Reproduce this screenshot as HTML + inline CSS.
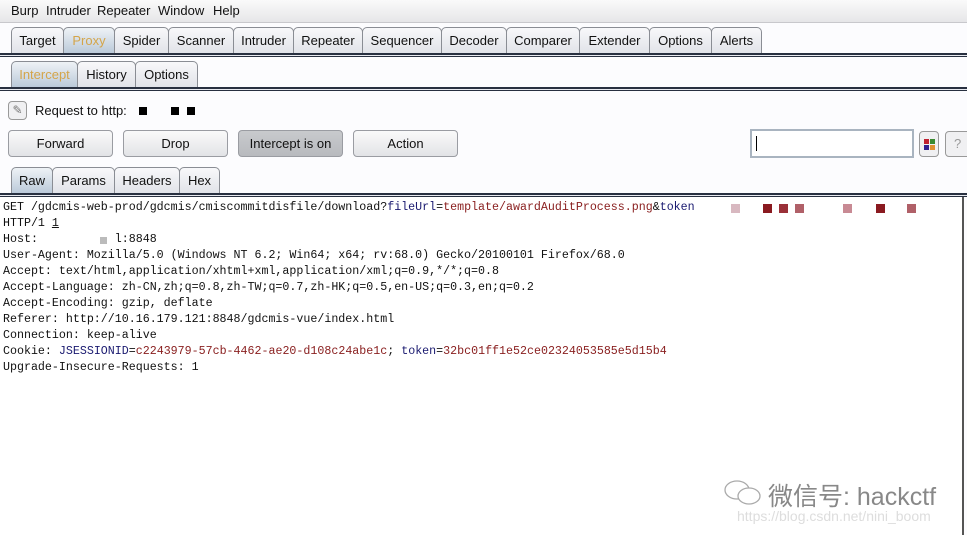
<!DOCTYPE html>
<html><head><meta charset="utf-8"><style>
*{box-sizing:border-box;margin:0;padding:0}
body{width:967px;height:535px;overflow:hidden;background:#fcfcfe;font-family:"Liberation Sans",sans-serif;font-size:13px;color:#111;position:relative}
.abs{position:absolute}
.menu{left:0;top:0;width:967px;height:23px;background:linear-gradient(#fafafa,#e6e6e8);border-bottom:1px solid #c8c8cc}
.menu span{position:absolute;top:3px}
.tab{position:absolute;height:27px;border:1px solid #8a8d94;border-bottom:none;border-radius:5px 5px 0 0;background:linear-gradient(#f8f8fa,#e0e2e8);text-align:center;line-height:25px;font-size:13px}
.tab.sel{background:linear-gradient(#eef2f6,#b9c8d8);color:#d4a54a}
.line{position:absolute;left:0;width:967px;height:4px;border-top:2px solid #283040;border-bottom:1px solid #283040;background:#e8eaf0}
.btn{position:absolute;top:130px;height:27px;width:105px;border:1px solid #9a9ca2;border-radius:4px;background:linear-gradient(#fafafa,#e2e3e6);text-align:center;line-height:25px;font-size:13px}
.code{left:3px;top:200px;font-family:"Liberation Mono",monospace;font-size:11.65px;line-height:16px;white-space:pre;color:#111}
.b{color:#1a1a70}.r{color:#8a2020}
.sq{position:absolute;width:9px;height:9px;top:204px}
</style></head><body>
<div class="abs menu"><span style="left:11px">Burp</span><span style="left:46px">Intruder</span><span style="left:97px">Repeater</span><span style="left:158px">Window</span><span style="left:213px">Help</span></div>
<div class="tab" style="left:11px;top:27px;width:53px">Target</div>
<div class="tab sel" style="left:63px;top:27px;width:52px">Proxy</div>
<div class="tab" style="left:114px;top:27px;width:55px">Spider</div>
<div class="tab" style="left:168px;top:27px;width:66px">Scanner</div>
<div class="tab" style="left:233px;top:27px;width:61px">Intruder</div>
<div class="tab" style="left:293px;top:27px;width:70px">Repeater</div>
<div class="tab" style="left:362px;top:27px;width:80px">Sequencer</div>
<div class="tab" style="left:441px;top:27px;width:66px">Decoder</div>
<div class="tab" style="left:506px;top:27px;width:74px">Comparer</div>
<div class="tab" style="left:579px;top:27px;width:71px">Extender</div>
<div class="tab" style="left:649px;top:27px;width:63px">Options</div>
<div class="tab" style="left:711px;top:27px;width:51px">Alerts</div>
<div class="line" style="top:53px"></div>
<div class="tab sel" style="left:11px;top:61px;width:67px">Intercept</div>
<div class="tab" style="left:77px;top:61px;width:59px">History</div>
<div class="tab" style="left:135px;top:61px;width:63px">Options</div>
<div class="line" style="top:87px"></div>
<div class="abs" style="left:8px;top:101px;width:19px;height:19px;border:1px solid #999;border-radius:4px;background:#f0f0f2;text-align:center;line-height:17px;color:#777;font-size:12px">✎</div>
<div class="abs" style="left:35px;top:103px">Request to http:</div>
<div class="abs" style="left:139px;top:107px;width:8px;height:8px;background:#000"></div>
<div class="abs" style="left:171px;top:107px;width:8px;height:8px;background:#000"></div>
<div class="abs" style="left:187px;top:107px;width:8px;height:8px;background:#000"></div>
<div class="btn" style="left:8px">Forward</div>
<div class="btn" style="left:123px">Drop</div>
<div class="btn" style="left:238px;background:linear-gradient(#c8cacd,#b8babe)">Intercept is on</div>
<div class="btn" style="left:353px">Action</div>
<div class="abs" style="left:750px;top:129px;width:164px;height:29px;border:2px solid #a9b4c0;background:#fff"><div style="position:absolute;left:4px;top:5px;width:1px;height:15px;background:#000"></div></div>
<div class="abs" style="left:919px;top:131px;width:20px;height:26px;border:1px solid #999;border-radius:4px;background:#f0f0f2">
<div class="abs" style="left:4px;top:7px;width:5px;height:5px;background:#c02030"></div><div class="abs" style="left:10px;top:7px;width:5px;height:5px;background:#3a8a30"></div><div class="abs" style="left:4px;top:13px;width:5px;height:5px;background:#302090"></div><div class="abs" style="left:10px;top:13px;width:5px;height:5px;background:#e09030"></div></div>
<div class="abs" style="left:945px;top:131px;width:30px;height:26px;border:1px solid #999;border-radius:4px;background:#f0f0f2;color:#999;padding-left:8px;line-height:24px">?</div>
<div class="tab sel" style="left:11px;top:167px;width:42px;color:#111">Raw</div>
<div class="tab" style="left:52px;top:167px;width:63px">Params</div>
<div class="tab" style="left:114px;top:167px;width:66px">Headers</div>
<div class="tab" style="left:179px;top:167px;width:41px">Hex</div>
<div class="line" style="top:193px"></div>
<div class="abs" style="left:0;top:197px;width:964px;height:338px;background:#fff;border-right:2px solid #555"></div>
<div class="abs code">GET /gdcmis-web-prod/gdcmis/cmiscommitdisfile/download?<span class="b">fileUrl</span>=<span class="r">template/awardAuditProcess.png</span>&amp;<span class="b">token</span>
HTTP/1 <u>1</u>
Host:           l:8848
User-Agent: Mozilla/5.0 (Windows NT 6.2; Win64; x64; rv:68.0) Gecko/20100101 Firefox/68.0
Accept: text/html,application/xhtml+xml,application/xml;q=0.9,*/*;q=0.8
Accept-Language: zh-CN,zh;q=0.8,zh-TW;q=0.7,zh-HK;q=0.5,en-US;q=0.3,en;q=0.2
Accept-Encoding: gzip, deflate
Referer: http://10.16.179.121:8848/gdcmis-vue/index.html
Connection: keep-alive
Cookie: <span class="b">JSESSIONID</span>=<span class="r">c2243979-57cb-4462-ae20-d108c24abe1c</span>; <span class="b">token</span>=<span class="r">32bc01ff1e52ce02324053585e5d15b4</span>
Upgrade-Insecure-Requests: 1</div>
<div class="abs" style="left:100px;top:237px;width:7px;height:7px;background:#bbb"></div>
<div class="sq" style="left:731px;background:#d8b8c0"></div>
<div class="sq" style="left:763px;background:#8a1a20"></div>
<div class="sq" style="left:779px;background:#9a3038"></div>
<div class="sq" style="left:795px;background:#b06068"></div>
<div class="sq" style="left:843px;background:#c88a94"></div>
<div class="sq" style="left:876px;background:#8a1a20"></div>
<div class="sq" style="left:907px;background:#b06068"></div>
<svg class="abs" style="left:722px;top:478px" width="42" height="30" viewBox="0 0 42 30"><g fill="none" stroke="#aaa" stroke-width="1.3"><ellipse cx="15" cy="12" rx="12" ry="9"/><ellipse cx="27" cy="18" rx="11" ry="8" fill="#fff"/></g></svg>
<div class="abs" style="left:768px;top:477px;font-size:25px;color:#888;font-family:'Liberation Sans','Noto Sans CJK SC',sans-serif">微信号: hackctf</div>
<div class="abs" style="left:737px;top:508px;font-size:14px;color:#ddd">https://blog.csdn.net/nini_boom</div>
</body></html>
